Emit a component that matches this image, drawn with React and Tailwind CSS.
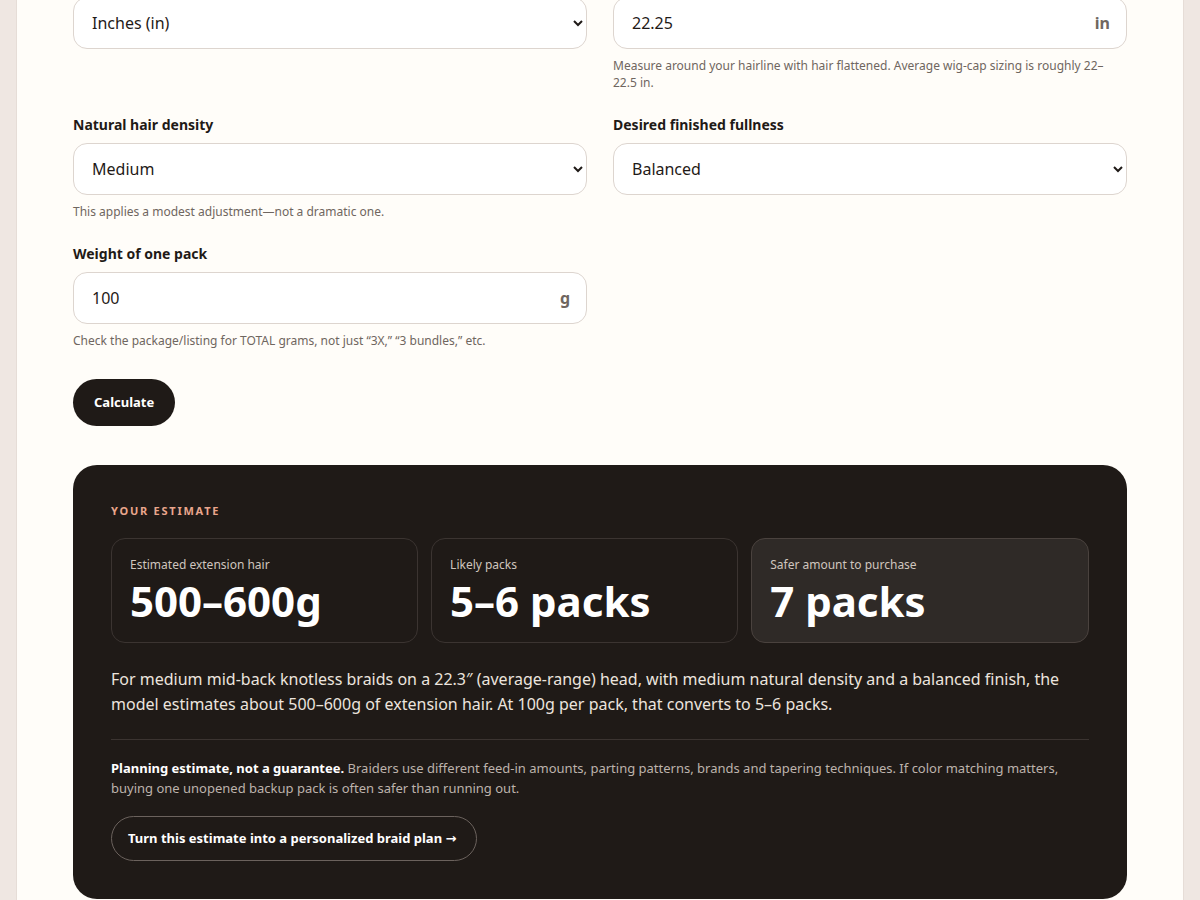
import { useState } from "react"

const font = { fontFamily: '"Noto Sans", "Open Sans", sans-serif' }

function Field({ label, children, hint }) {
  return (
    <div className="flex flex-col">
      {label && (
        <label className="mb-2 text-[14px] leading-5 font-bold text-[#1f1a17]">{label}</label>
      )}
      {children}
      {hint && <p className="mt-2 text-[12px] leading-[17px] text-[#6f6660]">{hint}</p>}
    </div>
  )
}

function Select({ value, onChange, options }) {
  return (
    <select
      value={value}
      onChange={(e) => onChange(e.target.value)}
      className="h-[52px] w-full rounded-[14px] border border-[#ddd5cf] bg-white pl-[14px] pr-3 text-[16px] text-[#1f1a17]"
    >
      {options.map((o) => (
        <option key={o} value={o}>
          {o}
        </option>
      ))}
    </select>
  )
}

function UnitInput({ value, onChange, unit }) {
  return (
    <div className="flex h-[52px] w-full items-center rounded-[14px] border border-[#ddd5cf] bg-white pl-[14px] pr-4">
      <input
        value={value}
        onChange={(e) => onChange(e.target.value)}
        className="min-w-0 flex-1 bg-transparent px-1 text-[16px] text-[#1f1a17] outline-none"
      />
      <span className="text-[16px] font-bold text-[#6f6660]">{unit}</span>
    </div>
  )
}

function Stat({ label, value, highlight }) {
  return (
    <div
      className={
        highlight
          ? "rounded-[14px] border border-[#4a423e] bg-[#2f2a27] px-[18px] pt-[17px] pb-[18px]"
          : "rounded-[14px] border border-[#3b3431] px-[18px] pt-[17px] pb-[18px]"
      }
    >
      <div className="mb-1 text-[12px] leading-[18px] text-[#cfc5be]">{label}</div>
      <div className="text-[42px] leading-[46px] font-bold text-white">{value}</div>
    </div>
  )
}

export default function App() {
  const [unit, setUnit] = useState("Inches (in)")
  const [head, setHead] = useState("22.25")
  const [density, setDensity] = useState("Medium")
  const [fullness, setFullness] = useState("Balanced")
  const [packWeight, setPackWeight] = useState("100")

  return (
    <div className="min-h-screen bg-[#efe7e2] px-4" style={font}>
      <div className="mx-auto border-x border-[#e6ddd7] bg-[#fffdf9] px-14 pb-10">
        {/* --- Form --- */}
        <div className="-mt-[3px] grid grid-cols-2 gap-x-[26px] gap-y-6">
          <Field>
            <Select value={unit} onChange={setUnit} options={["Inches (in)", "Centimeters (cm)"]} />
          </Field>
          <Field hint="Measure around your hairline with hair flattened. Average wig-cap sizing is roughly 22–22.5 in.">
            <UnitInput value={head} onChange={setHead} unit="in" />
          </Field>

          <Field label="Natural hair density" hint="This applies a modest adjustment—not a dramatic one.">
            <Select value={density} onChange={setDensity} options={["Fine", "Medium", "Thick"]} />
          </Field>
          <Field label="Desired finished fullness">
            <Select value={fullness} onChange={setFullness} options={["Natural", "Balanced", "Full"]} />
          </Field>

          <Field
            label="Weight of one pack"
            hint="Check the package/listing for TOTAL grams, not just “3X,” “3 bundles,” etc."
          >
            <UnitInput value={packWeight} onChange={setPackWeight} unit="g" />
          </Field>
        </div>

        <button className="mt-[30px] h-[47px] rounded-full bg-[#1f1a17] px-[21px] text-[13px] font-bold text-white">
          Calculate
        </button>

        {/* --- Result --- */}
        <div className="mt-[39px] rounded-[24px] bg-[#1f1a17] px-[38px] pt-[38px] pb-[38px]">
          <div className="mb-[19px] text-[11px] leading-4 font-bold tracking-[0.16em] text-[#e9a68c]">
            YOUR ESTIMATE
          </div>
          <div className="grid grid-cols-[1fr_1fr_1.1fr] gap-[13px]">
            <Stat label="Estimated extension hair" value="500–600g" />
            <Stat label="Likely packs" value="5–6 packs" />
            <Stat label="Safer amount to purchase" value="7 packs" highlight />
          </div>

          <p className="mt-6 border-b border-[#3b3431] pb-[22px] text-[16px] leading-[25px] text-[#ece4de]">
            For medium mid-back knotless braids on a 22.3″ (average-range) head, with medium natural density and a
            balanced finish, the model estimates about 500–600g of extension hair. At 100g per pack, that converts to
            5–6 packs.
          </p>

          <p className="mt-[18px] text-[13px] leading-5 text-[#bdb3ac]">
            <strong className="font-bold text-white">Planning estimate, not a guarantee.</strong> Braiders use
            different feed-in amounts, parting patterns, brands and tapering techniques. If color matching matters,
            buying one unopened backup pack is often safer than running out.
          </p>

          <button className="mt-[18px] h-[45px] rounded-full border border-[#6b625d] pl-4 pr-5 text-[13px] font-bold text-white">
            Turn this estimate into a personalized braid plan{" "}
            <span style={{ fontFamily: '"DejaVu Sans", sans-serif' }}>→</span>
          </button>
        </div>
      </div>
    </div>
  )
}
